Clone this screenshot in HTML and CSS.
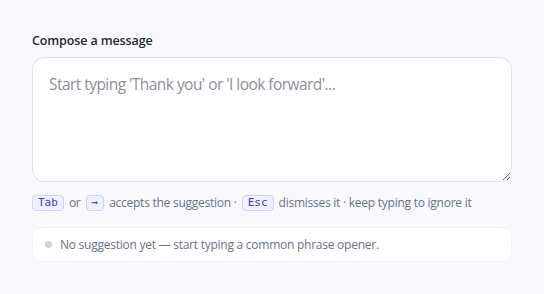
FILE: index.html
```html
<!DOCTYPE html>
<html lang="en">
<head>
<meta charset="utf-8">
<title>Compose</title>
<link rel="stylesheet" href="styles.css">
</head>
<body>
<main class="composer">
  <label class="label" for="msg">Compose a message</label>
  <textarea id="msg" class="input" placeholder="Start typing 'Thank you' or 'I look forward'..."></textarea>
  <p class="hint"><kbd>Tab</kbd> or <kbd>→</kbd> accepts the suggestion · <kbd>Esc</kbd> dismisses it · keep typing to ignore it</p>
  <div class="status"><span class="dot"></span><span>No suggestion yet — start typing a common phrase opener.</span></div>
</main>
</body>
</html>
```
FILE: styles.css
```css
html, body { margin: 0; background: #f8f9fc; }
body { font-family: "Open Sans", "Noto Sans", sans-serif; color: #1e293b; }
.composer { padding: 32px 32px 0 32px; display: flex; flex-direction: column; width: 480px; }
.label { font-size: 12.5px; font-weight: 600; color: #1f2937; line-height: 18px; margin-bottom: 7px; letter-spacing: -0.12px; }
.input {
  box-sizing: border-box; height: 125px; width: 480px; resize: vertical;
  border: 1px solid #dde3ec; border-radius: 12px; background: #fff;
  padding: 15px 16px; font-family: inherit; font-size: 15.5px; line-height: 22px; color: #1e293b;
  letter-spacing: -0.55px; outline: none;
}
.input::placeholder { color: #8a9099; }
.hint { margin: 12px 0 0 0; font-size: 12px; line-height: 18px; color: #64748b; display: flex; align-items: center; gap: 5px; white-space: nowrap; letter-spacing: -0.25px; }
kbd {
  font-family: "DejaVu Sans Mono", monospace; font-size: 11px; color: #4338ca; letter-spacing: 0;
  background: #eef2ff; border: 1px solid #c7d2fe; border-radius: 4px; padding: 0 5px; line-height: 14px;
}
.status {
  margin-top: 15px; background: #fff; border: 1px solid #eef1f5; border-radius: 10px;
  height: 35px; box-sizing: border-box; display: flex; align-items: center; gap: 8px; padding: 0 12px;
  font-size: 12px; color: #64748b; letter-spacing: -0.25px;
}
.dot { width: 7px; height: 7px; border-radius: 50%; background: #cbd3df; flex: none; }
```
